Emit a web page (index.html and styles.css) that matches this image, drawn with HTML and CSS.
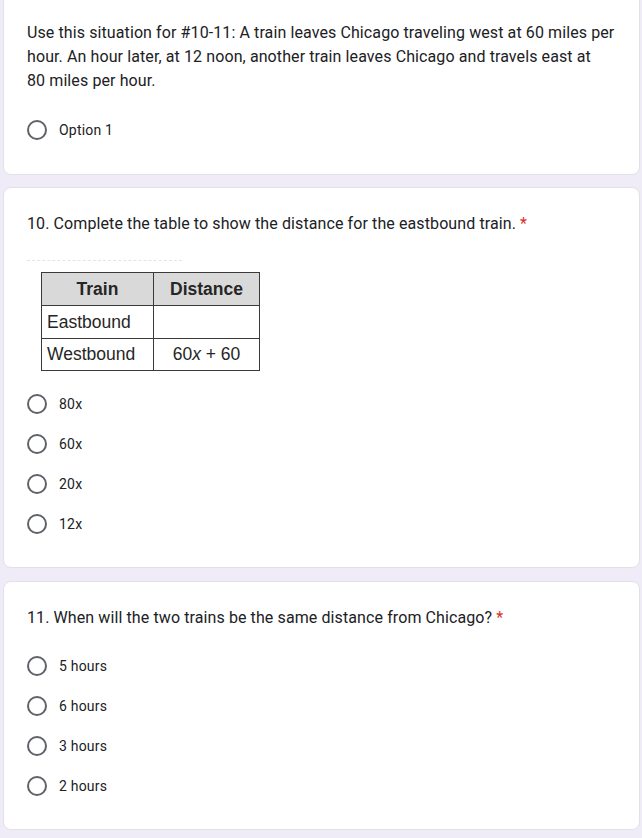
FILE: index.html
```html
<!DOCTYPE html>
<html>
<head>
<meta charset="utf-8">
<link rel="stylesheet" href="styles.css">
</head>
<body>
<div class="page">
  <section class="card card-first">
    <div class="title">Use this situation for #10-11: A train leaves Chicago traveling west at 60 miles per hour. An hour later, at 12 noon, another train leaves Chicago and travels east at 80&nbsp;miles per hour.</div>
    <div class="options opts-first">
      <div class="opt"><span class="radio"></span><span class="label">Option 1</span></div>
    </div>
  </section>

  <section class="card card-second">
    <div class="title">10. Complete the table to show the distance for the eastbound train. <span class="req">*</span></div>
    <div class="figure">
      <div class="faint"></div>
      <table class="tbl">
        <tr><th>Train</th><th>Distance</th></tr>
        <tr class="r2"><td>Eastbound</td><td></td></tr>
        <tr class="r3"><td>Westbound</td><td class="c">60<i>x</i> + 60</td></tr>
      </table>
    </div>
    <div class="options">
      <div class="opt"><span class="radio"></span><span class="label">80x</span></div>
      <div class="opt"><span class="radio"></span><span class="label">60x</span></div>
      <div class="opt"><span class="radio"></span><span class="label">20x</span></div>
      <div class="opt"><span class="radio"></span><span class="label">12x</span></div>
    </div>
  </section>

  <section class="card card-third">
    <div class="title">11. When will the two trains be the same distance from Chicago? <span class="req">*</span></div>
    <div class="options opts-third">
      <div class="opt"><span class="radio"></span><span class="label">5 hours</span></div>
      <div class="opt"><span class="radio"></span><span class="label">6 hours</span></div>
      <div class="opt"><span class="radio"></span><span class="label">3 hours</span></div>
      <div class="opt"><span class="radio"></span><span class="label">2 hours</span></div>
    </div>
  </section>
</div>
</body>
</html>
```

FILE: styles.css
```css
html, body {
  margin: 0;
  padding: 0;
  background: #efecf7;
}
body {
  font-family: Roboto, "Noto Sans", sans-serif;
  color: #202124;
  overflow: hidden;
}
.page {
  display: flex;
  flex-direction: column;
  gap: 13px;
  padding: 0 2px 0 3px;
  margin-top: -10px;
}
.card {
  background: #fff;
  border: 1px solid #e3e1e8;
  border-radius: 8px;
  padding: 0 23px 0 23px;
  box-sizing: border-box;
}
.card-first {
  padding-top: 30px;
  height: 185px;
}
.card-second {
  padding-top: 24px;
  height: 381px;
  margin-top: -1px;
}
.card-third {
  padding-top: 24px;
  height: 249px;
}
.title {
  font-family: Roboto, "Noto Sans", sans-serif;
  font-size: 16px;
  line-height: 24px;
  letter-spacing: 0.1px;
  color: #202124;
}
.req {
  color: #d93025;
}
.options {
  display: flex;
  flex-direction: column;
}
.opts-first {
  margin-top: 17px;
}
.opts-third {
  margin-top: 16px;
}
.opt {
  height: 40px;
  display: flex;
  align-items: center;
  gap: 12px;
}
.radio {
  width: 20px;
  height: 20px;
  border: 2px solid #5f6368;
  border-radius: 50%;
  box-sizing: border-box;
  flex: none;
}
.label {
  font-family: Roboto, sans-serif;
  font-size: 14px;
  color: #202124;
  letter-spacing: 0.2px;
}
.figure {
  margin-top: 24px;
  margin-bottom: 13px;
}
.faint {
  width: 155px;
  height: 1px;
  border-top: 1px dashed #e4e4e4;
  margin-bottom: 10px;
}
.tbl {
  margin-left: 14px;
  border-collapse: collapse;
  font-family: "Liberation Sans", Arial, sans-serif;
  font-size: 17.5px;
  color: #262626;
}
.tbl th, .tbl td {
  border: 1.5px solid #3a3a3a;
  padding: 0 5px;
  box-sizing: border-box;
}
.tbl th {
  background: #d9d9d9;
  font-weight: bold;
  text-align: center;
  height: 33px;
}
.tbl .r2 td {
  height: 33px;
}
.tbl .r3 td {
  height: 32px;
}
.tbl th:first-child, .tbl td:first-child {
  width: 112px;
}
.tbl th:last-child, .tbl td:last-child {
  width: 106px;
}
.tbl td {
  text-align: left;
}
.tbl td.c {
  text-align: center;
}
.tbl i {
  font-style: italic;
}
```
